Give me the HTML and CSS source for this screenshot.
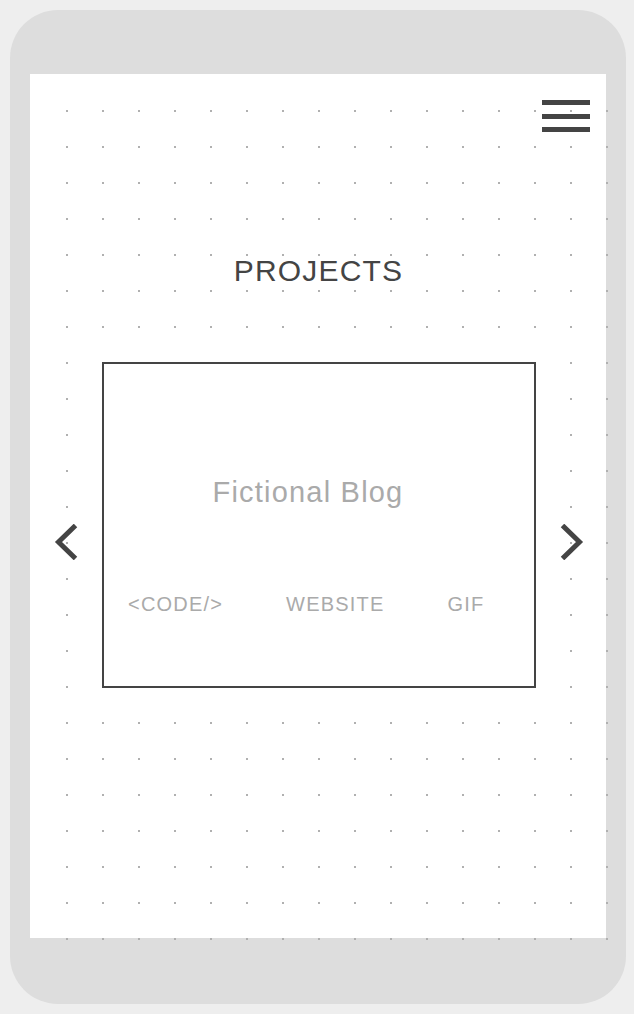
FILE: index.html
```html
<!DOCTYPE html>
<html lang="en">
<head>
<meta charset="utf-8">
<title>Projects</title>
<link rel="stylesheet" href="styles.css">
</head>
<body>
<div class="phone">
  <div class="screen">
    <header class="topbar">
      <button class="menu" aria-label="Menu"><span></span><span></span><span></span></button>
    </header>
    <h1 class="title">PROJECTS</h1>
    <div class="carousel">
      <svg class="chev" viewBox="0 0 24 36" aria-hidden="true"><polyline points="21.5,1.5 4.5,18 21.5,34.5" fill="none" stroke="#444" stroke-width="5"/></svg>
      <div class="card">
        <h2 class="card-title">Fictional Blog</h2>
        <nav class="links">
          <a href="#">&lt;CODE/&gt;</a>
          <a href="#">WEBSITE</a>
          <a href="#">GIF</a>
        </nav>
      </div>
      <svg class="chev" viewBox="0 0 24 36" aria-hidden="true"><polyline points="2.5,1.5 19.5,18 2.5,34.5" fill="none" stroke="#444" stroke-width="5"/></svg>
    </div>
  </div>
</div>
</body>
</html>
```
FILE: styles.css
```css
html, body {
  margin: 0;
}
body {
  background: #eeeeee;
  padding: 10px;
  font-family: "Liberation Sans", Arial, sans-serif;
}
.phone {
  width: 616px;
  height: 994px;
  box-sizing: border-box;
  background: #dddddd;
  border-radius: 48px;
  padding: 64px 20px 66px;
}
.screen {
  position: relative;
  height: 864px;
  background: #ffffff;
  display: flex;
  flex-direction: column;
}
.screen::before {
  content: "";
  position: absolute;
  left: 2px;
  top: 2px;
  right: -3px;
  bottom: -3px;
  background-image: radial-gradient(circle at 2px 2px, #b0b0b0 1px, rgba(176,176,176,0) 1.5px);
  background-size: 36px 36px;
  background-position: 33px 33px;
  pointer-events: none;
}
.screen > * {
  position: relative;
}
.topbar {
  display: flex;
  justify-content: flex-end;
  padding: 26px 16px 0;
}
.menu {
  width: 48px;
  height: 32px;
  padding: 0;
  border: 0;
  background: none;
  display: flex;
  flex-direction: column;
  justify-content: space-between;
}
.menu span {
  display: block;
  height: 5px;
  background: #444;
}
.title {
  margin: 122px 0 0;
  padding-left: 1px;
  font-size: 30px;
  line-height: 34px;
  font-weight: normal;
  letter-spacing: 1.2px;
  text-align: center;
  color: #444;
}
.carousel {
  display: flex;
  justify-content: center;
  align-items: flex-start;
  gap: 24px;
  margin-top: 74px;
  padding-left: 2px;
}
.chev {
  flex: none;
  width: 24px;
  height: 36px;
  margin-top: 162px;
}
.card {
  width: 434px;
  height: 326px;
  box-sizing: border-box;
  border: 2px solid #444;
  background: #fff;
  padding: 111px 24px 0;
}
.card-title {
  margin: 0 22px 0 0;
  font-size: 29px;
  line-height: 34px;
  font-weight: normal;
  letter-spacing: 1.2px;
  text-align: center;
  color: #aaa;
}
.links {
  display: flex;
  gap: 63px;
  margin-top: 84px;
}
.links a {
  font-size: 20px;
  line-height: 22px;
  letter-spacing: 1.2px;
  color: #aaa;
  text-decoration: none;
}
```
